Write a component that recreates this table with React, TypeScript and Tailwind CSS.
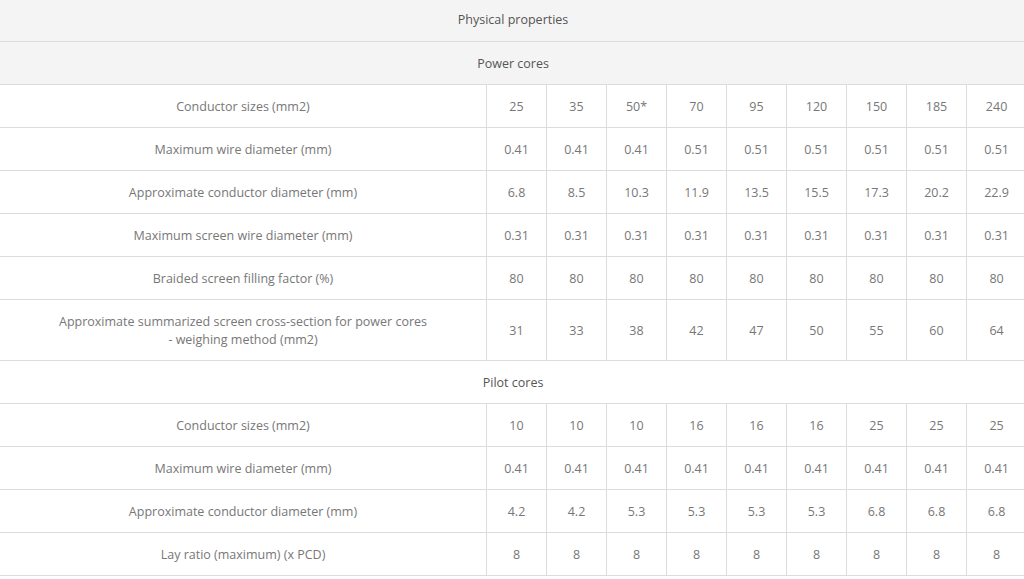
const sizes = ["25", "35", "50*", "70", "95", "120", "150", "185", "240"];

const powerRows: { label: string[]; values: string[] }[] = [
  { label: ["Conductor sizes (mm2)"], values: sizes },
  { label: ["Maximum wire diameter (mm)"], values: ["0.41", "0.41", "0.41", "0.51", "0.51", "0.51", "0.51", "0.51", "0.51"] },
  { label: ["Approximate conductor diameter (mm)"], values: ["6.8", "8.5", "10.3", "11.9", "13.5", "15.5", "17.3", "20.2", "22.9"] },
  { label: ["Maximum screen wire diameter (mm)"], values: ["0.31", "0.31", "0.31", "0.31", "0.31", "0.31", "0.31", "0.31", "0.31"] },
  { label: ["Braided screen filling factor (%)"], values: ["80", "80", "80", "80", "80", "80", "80", "80", "80"] },
  {
    label: ["Approximate summarized screen cross-section for power cores", "- weighing method (mm2)"],
    values: ["31", "33", "38", "42", "47", "50", "55", "60", "64"],
  },
];

const pilotRows: { label: string[]; values: string[] }[] = [
  { label: ["Conductor sizes (mm2)"], values: ["10", "10", "10", "16", "16", "16", "25", "25", "25"] },
  { label: ["Maximum wire diameter (mm)"], values: ["0.41", "0.41", "0.41", "0.41", "0.41", "0.41", "0.41", "0.41", "0.41"] },
  { label: ["Approximate conductor diameter (mm)"], values: ["4.2", "4.2", "5.3", "5.3", "5.3", "5.3", "6.8", "6.8", "6.8"] },
  { label: ["Lay ratio (maximum) (x PCD)"], values: ["8", "8", "8", "8", "8", "8", "8", "8", "8"] },
];

const SectionRow = ({ title, shaded }: { title: string; shaded?: boolean }) => (
  <tr className={shaded ? "bg-[#f4f4f4]" : "bg-white"}>
    <td colSpan={10} className="border border-[#dcdcdc] pt-[13px] pb-[11px] text-center text-[#555] h-[43px]">
      {title}
    </td>
  </tr>
);

const DataRow = ({ label, values }: { label: string[]; values: string[] }) => (
  <tr>
    <td className="border border-[#dcdcdc] pt-[13px] pb-[11px] px-2 text-center w-[486px]">
      {label.map((l) => (
        <div key={l}>{l}</div>
      ))}
    </td>
    {values.map((v, i) => (
      <td key={i} className="border border-[#dcdcdc] pt-[13px] pb-[11px] text-center w-[60px]">
        {v}
      </td>
    ))}
  </tr>
);

export default function App() {
  return (
    <div className="w-[1024px] h-[579px] overflow-hidden bg-white">
      <table
        className="w-[1026px] -ml-px -mt-px border-collapse table-fixed text-[12.5px] leading-[18px] text-[#777]"
        style={{ fontFamily: '"Open Sans", "Noto Sans", sans-serif' }}
      >
        <colgroup>
          <col className="w-[487px]" />
          {sizes.map((s) => (
            <col key={s} className="w-[60px]" />
          ))}
        </colgroup>
        <tbody>
          <tr className="bg-[#f4f4f4]">
            <td colSpan={10} className="border border-[#dcdcdc] pb-[1px] text-center text-[#555] h-[42px]">
              Physical properties
            </td>
          </tr>
          <SectionRow title="Power cores" shaded />
          {powerRows.map((r) => (
            <DataRow key={r.label.join()} label={r.label} values={r.values} />
          ))}
          <SectionRow title="Pilot cores" />
          {pilotRows.map((r) => (
            <DataRow key={r.label.join()} label={r.label} values={r.values} />
          ))}
        </tbody>
      </table>
    </div>
  );
}
